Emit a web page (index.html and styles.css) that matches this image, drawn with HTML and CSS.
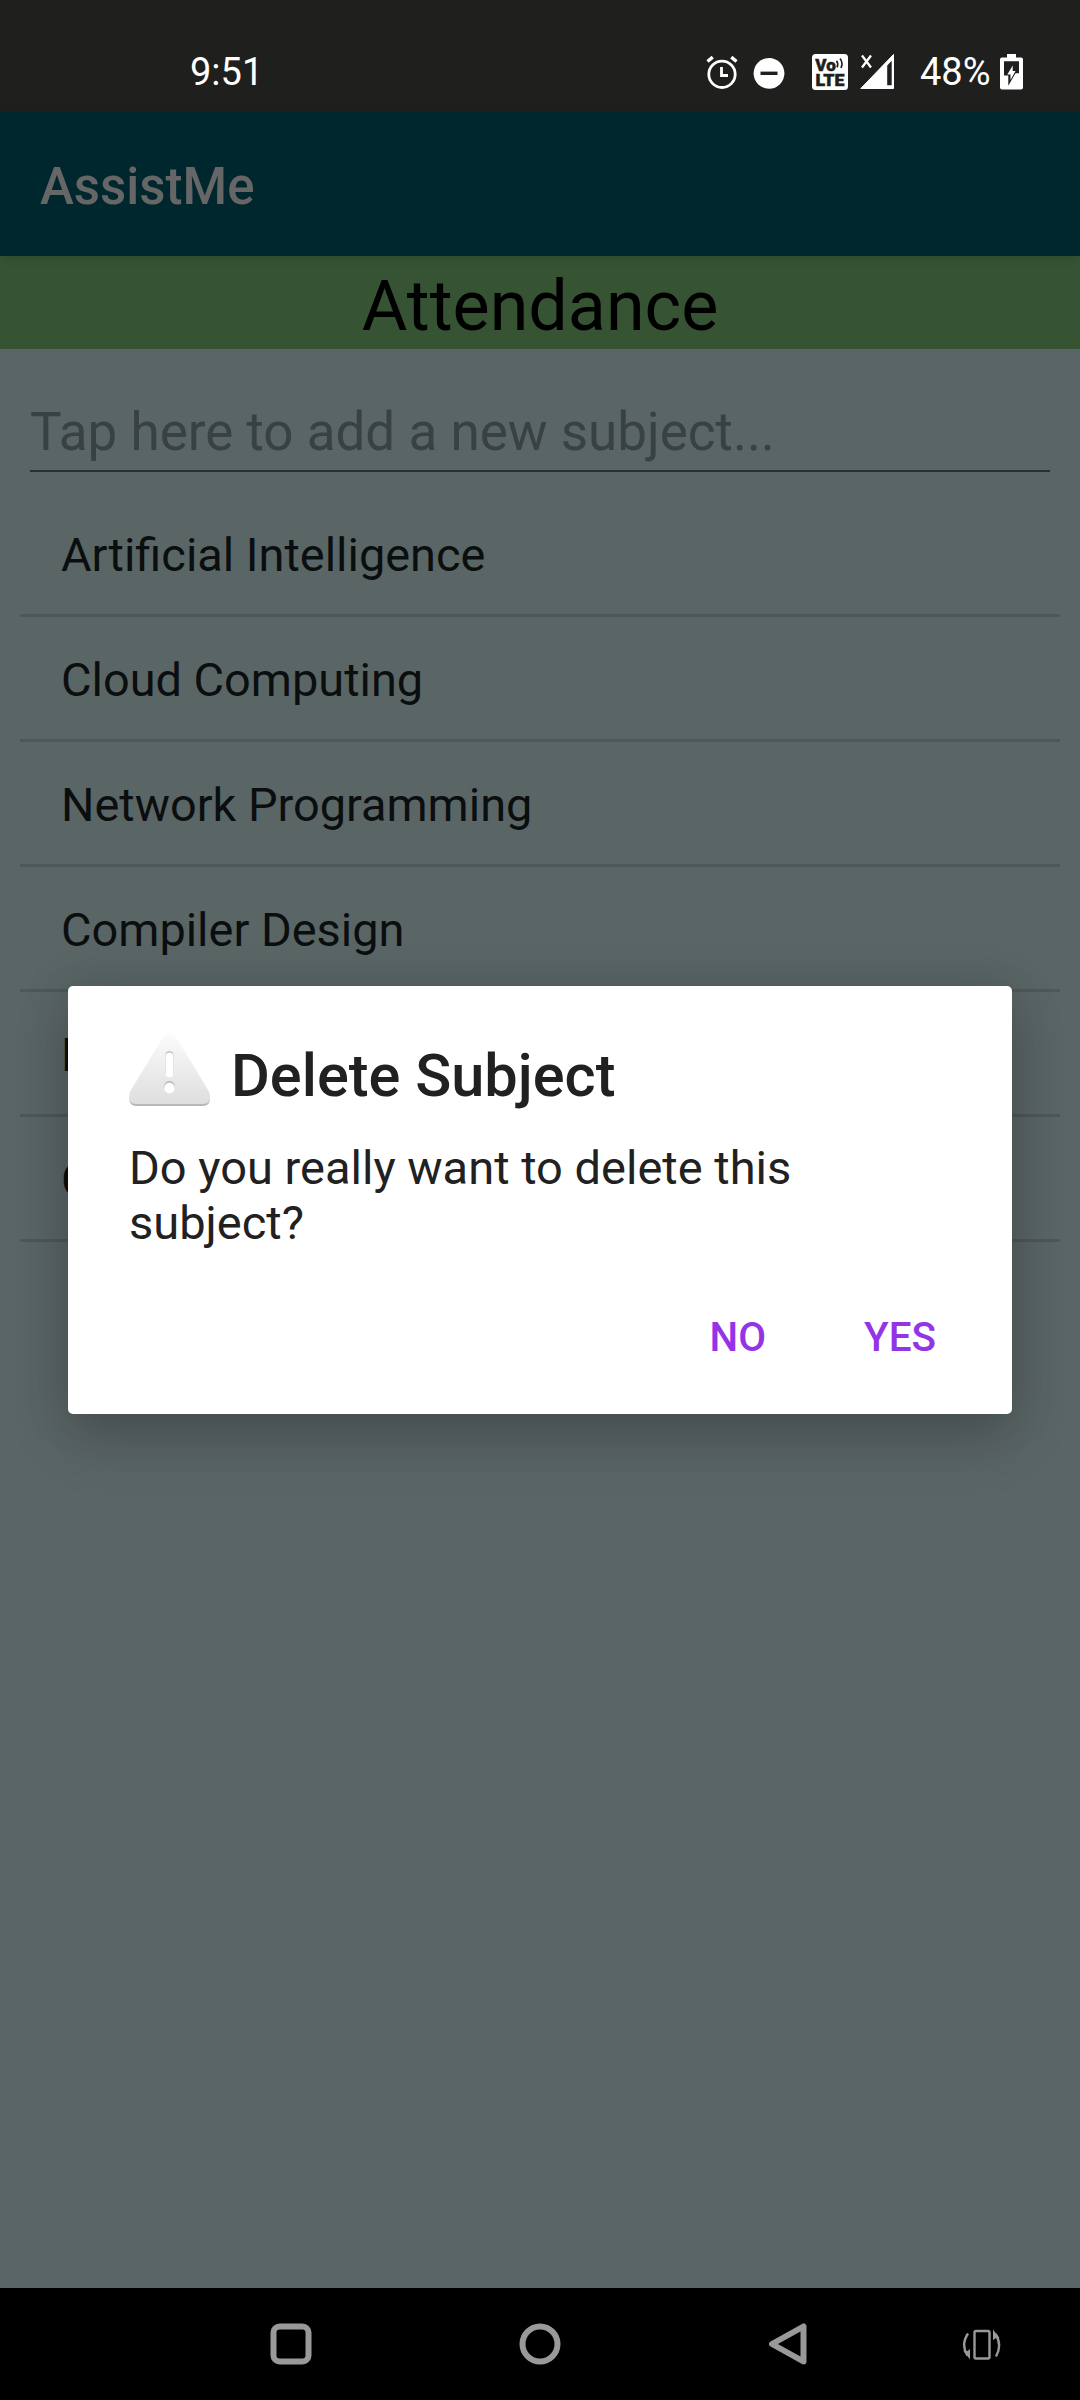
FILE: index.html
```html
<!DOCTYPE html>
<html lang="en">
<head>
<meta charset="utf-8">
<title>AssistMe</title>
<link rel="stylesheet" href="styles.css">
</head>
<body>
<div class="screen">
  <header class="status">
    <span class="clock">9:51</span>
    <div class="indicators">
      <svg class="alarm" width="32" height="36" viewBox="0 0 32 36" fill="none" stroke="#fff">
        <circle cx="16" cy="20.3" r="13.2" stroke-width="2.8"/>
        <path d="M15.5 13v8.5h6.5" stroke-width="2.8"/>
        <path d="M1.5 7.5l5.2-4.4M30.5 7.5l-5.2-4.4" stroke-width="3.4"/>
      </svg>
      <svg class="dnd" width="32" height="36" viewBox="0 0 32 36">
        <circle cx="16" cy="19.3" r="15.4" fill="#fff"/>
        <path d="M7.5 19.3h17" stroke="#1f1f1e" stroke-width="3.4"/>
      </svg>
      <svg class="volte" width="36" height="36" viewBox="0 0 36 36">
        <rect width="36" height="36" rx="3.5" fill="#fff"/>
        <text x="3.3" y="16.6" textLength="20.5" lengthAdjust="spacingAndGlyphs" class="volte-text">Vo</text>
        <text x="3.5" y="32.3" textLength="29" lengthAdjust="spacingAndGlyphs" class="volte-text">LTE</text>
        <path d="M24.5 6.8q2.2 3 .6 6.6M28 4.5q3.4 4.300 1 9.500" fill="none" stroke="#1f1f1e" stroke-width="1.6"/>
      </svg>
      <svg class="signal" width="36" height="36" viewBox="0 0 36 36">
        <path d="M33.500 .5v34H.8z" fill="#fff" stroke="#fff" stroke-linejoin="round"/>
        <path d="M27.200 11.500l4.500-4.700v24.400h-4.500z" fill="#1f1f1e"/>
        <path d="M2 1.500l9 12M11 1.500l-9 12" stroke="#fff" stroke-width="2.300"/>
      </svg>
      <span class="percent">48%</span>
      <svg class="battery" width="23" height="36" viewBox="0 0 23 36">
        <path d="M7 0h9v3.500h5q2 0 2 2V33.500q0 2-2 2H2q-2 0-2-2V5.500q0-2 2-2h5z" fill="#fff"/>
        <path d="M4 7.300h15v12h-3.500l-7.200 12.500V21.500H4z" fill="#1f1f1e"/>
        <path d="M12.700 11.500v5.600h2.800l-5 9v-5.700H7.300z" fill="#fff"/>
      </svg>
    </div>
  </header>
  <div class="appbar">AssistMe</div>
  <h1 class="heading">Attendance</h1>
  <main class="content">
    <div class="field">Tap here to add a new subject...</div>
    <ul class="subjects">
      <li>Artificial Intelligence</li>
      <li>Cloud Computing</li>
      <li>Network Programming</li>
      <li>Compiler Design</li>
      <li>D</li>
      <li>C</li>
    </ul>
  </main>
  <nav class="navbar">
    <svg width="42" height="42" viewBox="0 0 42 42"><rect x="3.500" y="3.500" width="35" height="35" rx="6"/></svg>
    <svg width="42" height="42" viewBox="0 0 42 42"><circle cx="21" cy="21" r="17.500"/></svg>
    <svg width="42" height="42" viewBox="0 0 42 42"><path d="M36.500 3.500v35L5 21z"/></svg>
    <svg class="rotate" width="42" height="42" viewBox="0 0 42 42">
      <rect x="13.500" y="8" width="15" height="27.500" rx="1.500"/>
      <path d="M7 10.500Q-.5 22 6.500 32.500M35 33.500Q41.500 22 34.500 11"/>
      <path class="tip" d="M9 26v10.500L2.500 28h4zM32 17V6.500L38.500 15H35z"/>
    </svg>
  </nav>
  <section class="dialog" role="dialog">
    <div class="dialog-head">
      <svg width="84" height="76" viewBox="0 0 84 76">
        <defs>
          <linearGradient id="plate" x1="0" y1="0" x2="0" y2="1">
            <stop offset="0" stop-color="#fcfcfc"/>
            <stop offset="1" stop-color="#dedede"/>
          </linearGradient>
          <linearGradient id="edge" x1="0" y1="0" x2="0" y2="1">
            <stop offset=".7" stop-color="#b4b4b4" stop-opacity="0"/>
            <stop offset="1" stop-color="#b4b4b4"/>
          </linearGradient>
        </defs>
        <path d="M35.500 4.500Q41.500-3 47.500 4.500L81 60.500Q84.500 72.500 75 73H8Q-1 72.500 2 60.500z" fill="url(#edge)"/>
        <path d="M35.500 3.500Q41.500-4 47.500 3.500L81 58.500Q84.500 70.500 75 71H8Q-1 70.500 2 58.500z" fill="url(#plate)"/>
        <path d="M41.500 22v17" stroke="#c8c8c8" stroke-width="8" stroke-linecap="round"/>
        <path d="M41.500 23.500v17" stroke="#fff" stroke-width="7.500" stroke-linecap="round"/>
        <circle cx="41.500" cy="53.200" r="5.400" fill="#c0c0c0"/>
        <circle cx="41.500" cy="55" r="5.200" fill="#fff"/>
      </svg>
      <h2>Delete Subject</h2>
    </div>
    <p>Do you really want to delete this subject?</p>
    <div class="actions"><button>NO</button><button>YES</button></div>
  </section>
</div>
</body>
</html>
```
FILE: styles.css
```css
* { box-sizing: border-box; margin: 0; padding: 0; }
body { font-family: Roboto, sans-serif; background: #5a6566; }
svg { display: block; flex: none; }
.screen {
  position: relative;
  width: 1080px;
  height: 2400px;
  display: flex;
  flex-direction: column;
  overflow: hidden;
}
.status {
  height: 112px;
  padding: 32px 57px 0 190px;
  display: flex;
  justify-content: space-between;
  background: #1f1f1e;
  color: #fff;
  font-size: 38px;
  line-height: 80px;
}
.indicators { height: 80px; display: flex; align-items: center; }
.dnd { margin-left: 15px; }
.volte { margin-left: 27px; }
.volte-text {
  font: 900 17px Roboto, sans-serif;
  fill: #1f1f1e;
  stroke: #1f1f1e;
  stroke-width: .5px;
}
.signal { margin-left: 12px; }
.percent { margin-left: 24px; width: 70px; white-space: nowrap; }
.battery { margin-left: 10px; }
.appbar {
  position: relative;
  height: 144px;
  padding: 3px 40px 0;
  background: #00272e;
  color: #666;
  font-size: 51px;
  font-weight: 500;
  line-height: 144px;
  box-shadow: 0 2px 10px rgba(0, 0, 0, .14);
}
.heading {
  height: 93px;
  background: #365434;
  color: #000;
  font-size: 70px;
  font-weight: 400;
  line-height: 100px;
  text-align: center;
}
.content { flex: 1; padding: 0 20px; }
.field {
  height: 123px;
  margin: 0 10px 20px;
  padding-top: 43px;
  border-bottom: 2px solid #263030;
  color: #394242;
  font-size: 53px;
  line-height: 80px;
}
.subjects { list-style: none; }
.subjects li {
  height: 125px;
  padding: 2px 41px 0;
  border-bottom: 3px solid #4d5858;
  color: #0b0e0e;
  font-size: 46.9px;
  line-height: 121px;
}
.navbar {
  height: 112px;
  padding: 0 77px 0 270px;
  display: flex;
  align-items: center;
  justify-content: space-between;
  background: #000;
}
.navbar svg { fill: none; stroke: #999; stroke-width: 6; stroke-linejoin: round; }
.navbar .rotate { margin-left: -55px; stroke-width: 2.4; }
.navbar .tip { fill: #999; stroke: none; }
.dialog {
  position: absolute;
  left: 68px;
  top: 986px;
  width: 944px;
  height: 428px;
  padding: 47px 60px 0;
  border-radius: 5px;
  background: #fff;
  color: #212121;
  box-shadow: 0 28px 56px rgba(0, 0, 0, .17), 0 0 50px rgba(0, 0, 0, .13);
}
.dialog-head { display: flex; gap: 19px; height: 107px; }
.dialog h2 { font-size: 59.5px; font-weight: 500; line-height: 87px; }
.dialog p { width: 761px; padding-left: 1px; font-size: 47px; line-height: 55px; }
.actions { display: flex; justify-content: flex-end; gap: 98px; padding: 47px 16px 0 0; }
.actions button {
  border: 0;
  background: none;
  color: #9334e6;
  font: 500 40.4px/82px Roboto, sans-serif;
}
```
